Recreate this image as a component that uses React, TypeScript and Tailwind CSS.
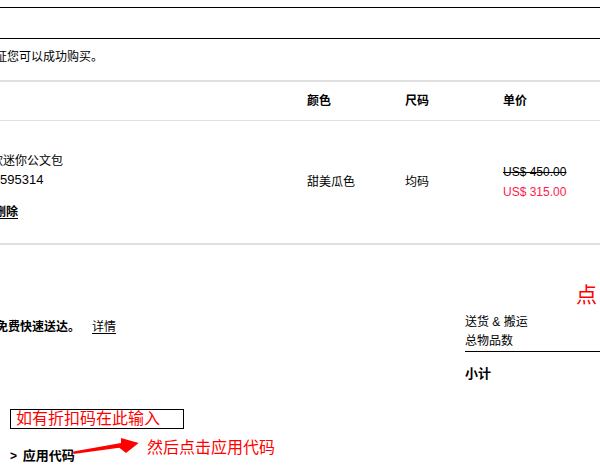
import { ReactNode } from "react"

const font = "font-['Liberation_Sans','Noto_Sans_CJK_SC',sans-serif]"

function Col({ children, className = "" }: { children: ReactNode; className?: string }) {
  return <div className={`flex items-center ${className}`}>{children}</div>
}

export default function App() {
  return (
    <div className={`relative w-[600px] h-[466px] overflow-hidden bg-white text-black text-[12px] leading-4 ${font}`}>
      {/* page header bars */}
      <div className="h-[8px] border-b border-black" />
      <div className="h-[31px] border-b border-black" />

      {/* notice */}
      <div className="h-[43px] pt-[10px] border-b-2 border-[#e0e0e0]">
        <p className="ml-[-17px] whitespace-nowrap">保证您可以成功购买。</p>
      </div>

      {/* table head */}
      <div className="grid grid-cols-[307px_98px_98px_1fr] h-[39px] border-b border-[#e0e0e0] font-bold">
        <div />
        <Col>颜色</Col>
        <Col>尺码</Col>
        <Col>单价</Col>
      </div>

      {/* item row */}
      <div className="grid grid-cols-[307px_98px_98px_1fr] h-[124px] border-b-2 border-[#e0e0e0]">
        <div className="pt-[32px]">
          <p className="ml-[-9px] whitespace-nowrap">款迷你公文包</p>
          <p className="mt-[3px] text-[13px]">595314</p>
          <a href="#" className="block mt-[16px] ml-[-6px] font-bold text-[12px] underline underline-offset-2">
            删除
          </a>
        </div>
        <Col>甜美瓜色</Col>
        <Col>均码</Col>
        <div className="flex flex-col justify-center leading-5">
          <span className="line-through decoration-black">US$ 450.00</span>
          <span className="text-[#ff1a4b]">US$ 315.00</span>
        </div>
      </div>

      {/* shipping + totals */}
      <div className="flex">
        <div className="w-[465px]">
          <p className="pt-[74px] font-bold whitespace-nowrap ml-[-4px]">
            免费快速送达。
            <a href="#" className="ml-[12px] font-normal underline underline-offset-2">
              详情
            </a>
          </p>
          <div className="mt-[74px] ml-[10px] w-[174px] h-[20px] border border-black px-[5px] text-[16px] leading-[18px] text-[#ff0000] whitespace-nowrap">
            如有折扣码在此输入
          </div>
          <p className="mt-[19px] ml-[10px] font-bold text-[13px] whitespace-nowrap">
            <span className="text-[12px] mr-[2px]">&gt;</span> 应用代码
          </p>
        </div>
        <div className="flex-1">
          <p className="pt-[69px]">送货 &amp; 搬运</p>
          <p className="mt-[3px] h-[19px] border-b border-black">总物品数</p>
          <p className="mt-[14px] font-bold text-[13px]">小计</p>
        </div>
      </div>

      {/* red hints */}
      <span className="absolute left-[576px] top-[282px] text-[21px] leading-[26px] text-[#ff0000]">点</span>
      <svg className="absolute left-[70px] top-[434px]" width="72" height="22" viewBox="0 0 72 22">
        <polygon points="3.3,17.5 51,9 51,4 68.7,9 56,19 49.3,13.8 3.3,20" fill="#ff0000" />
      </svg>
      <span className="absolute left-[147px] top-[439px] text-[16px] leading-[18px] text-[#ff0000] whitespace-nowrap">
        然后点击应用代码
      </span>
    </div>
  )
}
